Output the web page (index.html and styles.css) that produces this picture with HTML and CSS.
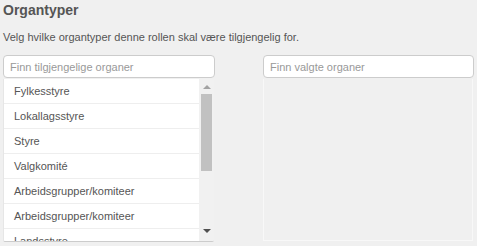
FILE: index.html
```html
<!DOCTYPE html>
<html lang="no">
<head>
    <meta charset="UTF-8">
    <meta name="viewport" content="width=device-width, initial-scale=1.0">
    <title>Organtyper</title>
    <link rel="stylesheet" href="styles.css">
</head>
<body>
    <div class="panel">
        <h3 class="panel-title">Organtyper</h3>
        <p class="panel-help">Velg hvilke organtyper denne rollen skal være tilgjengelig for.</p>
        <div class="picker">
            <div class="picker-col">
                <input class="picker-search" type="text" placeholder="Finn tilgjengelige organer">
                <div class="picker-box">
                    <ul class="picker-list">
                        <li>Fylkesstyre</li>
                        <li>Lokallagsstyre</li>
                        <li>Styre</li>
                        <li>Valgkomité</li>
                        <li>Arbeidsgrupper/komiteer</li>
                        <li>Arbeidsgrupper/komiteer</li>
                        <li>Landsstyre</li>
                        <li>Landsmøte</li>
                        <li>Årsmøte</li>
                        <li>Fylkesårsmøte</li>
                        <li>Sentralstyre</li>
                        <li>Kontrollkomité</li>
                        <li>Redaksjon</li>
                    </ul>
                    <div class="scrollbar">
                        <span class="scroll-arrow scroll-up"></span>
                        <div class="scroll-track">
                            <div class="scroll-thumb"></div>
                        </div>
                        <span class="scroll-arrow scroll-down"></span>
                    </div>
                </div>
            </div>
            <div class="picker-gap"></div>
            <div class="picker-col">
                <input class="picker-search" type="text" placeholder="Finn valgte organer">
                <div class="picker-box picker-box-empty"></div>
            </div>
        </div>
    </div>
</body>
</html>
```

FILE: styles.css
```css
body {
    font-family: 'Liberation Sans', Arial, sans-serif;
    background-color: #f0f0f0;
    color: #555;
    margin: 0;
}
.panel {
    padding: 0 3px;
}
.panel-title {
    font-size: 14px;
    font-weight: bold;
    margin: 0;
    padding-top: 2px;
    line-height: 16px;
}
.panel-help {
    font-size: 11px;
    margin: 12px 0 11px;
    line-height: 14px;
}
.picker {
    display: grid;
    grid-template-columns: 212px 1fr 211px;
}
.picker-col {
    display: flex;
    flex-direction: column;
}
.picker-search {
    box-sizing: border-box;
    height: 23px;
    width: 100%;
    margin: 0;
    padding: 0 6px;
    font-family: inherit;
    font-size: 11px;
    color: #555;
    background-color: white;
    border: 1px solid #ccc;
    border-radius: 4px;
    outline: none;
}
.picker-search::placeholder {
    color: #999;
}
.picker-box {
    display: flex;
    height: 162px;
    margin: 1px 1px 0 0;
    overflow: hidden;
    border-left: 1px solid #e6e6e6;
    border-bottom: 1px solid #ccc;
    border-radius: 0 0 2px 2px;
    background-color: #f1f1f1;
}
.picker-list {
    flex: 1;
    list-style: none;
    margin: 0;
    padding: 0;
    overflow: hidden;
}
.picker-list li {
    font-size: 11px;
    line-height: 24px;
    padding: 0 10px;
    background-color: white;
    border-bottom: 1px solid #eee;
    white-space: nowrap;
}
.scrollbar {
    width: 15px;
    display: flex;
    flex-direction: column;
    align-items: center;
    background-color: #f1f1f1;
}
.scroll-arrow {
    display: block;
    width: 0;
    height: 0;
    border-left: 4px solid transparent;
    border-right: 4px solid transparent;
}
.scroll-up {
    margin: 6px 0 5px;
    border-bottom: 4px solid #a3a3a3;
}
.scroll-down {
    margin: 5px 0 8px;
    border-top: 4px solid #505050;
}
.scroll-track {
    flex: 1;
    width: 11px;
}
.scroll-thumb {
    height: 77px;
    background-color: #c1c1c1;
}
.picker-box-empty {
    background-color: #f0f0f0;
    border: 1px solid #f8f8f8;
    border-top: none;
    border-radius: 0;
    height: 161px;
}
```
